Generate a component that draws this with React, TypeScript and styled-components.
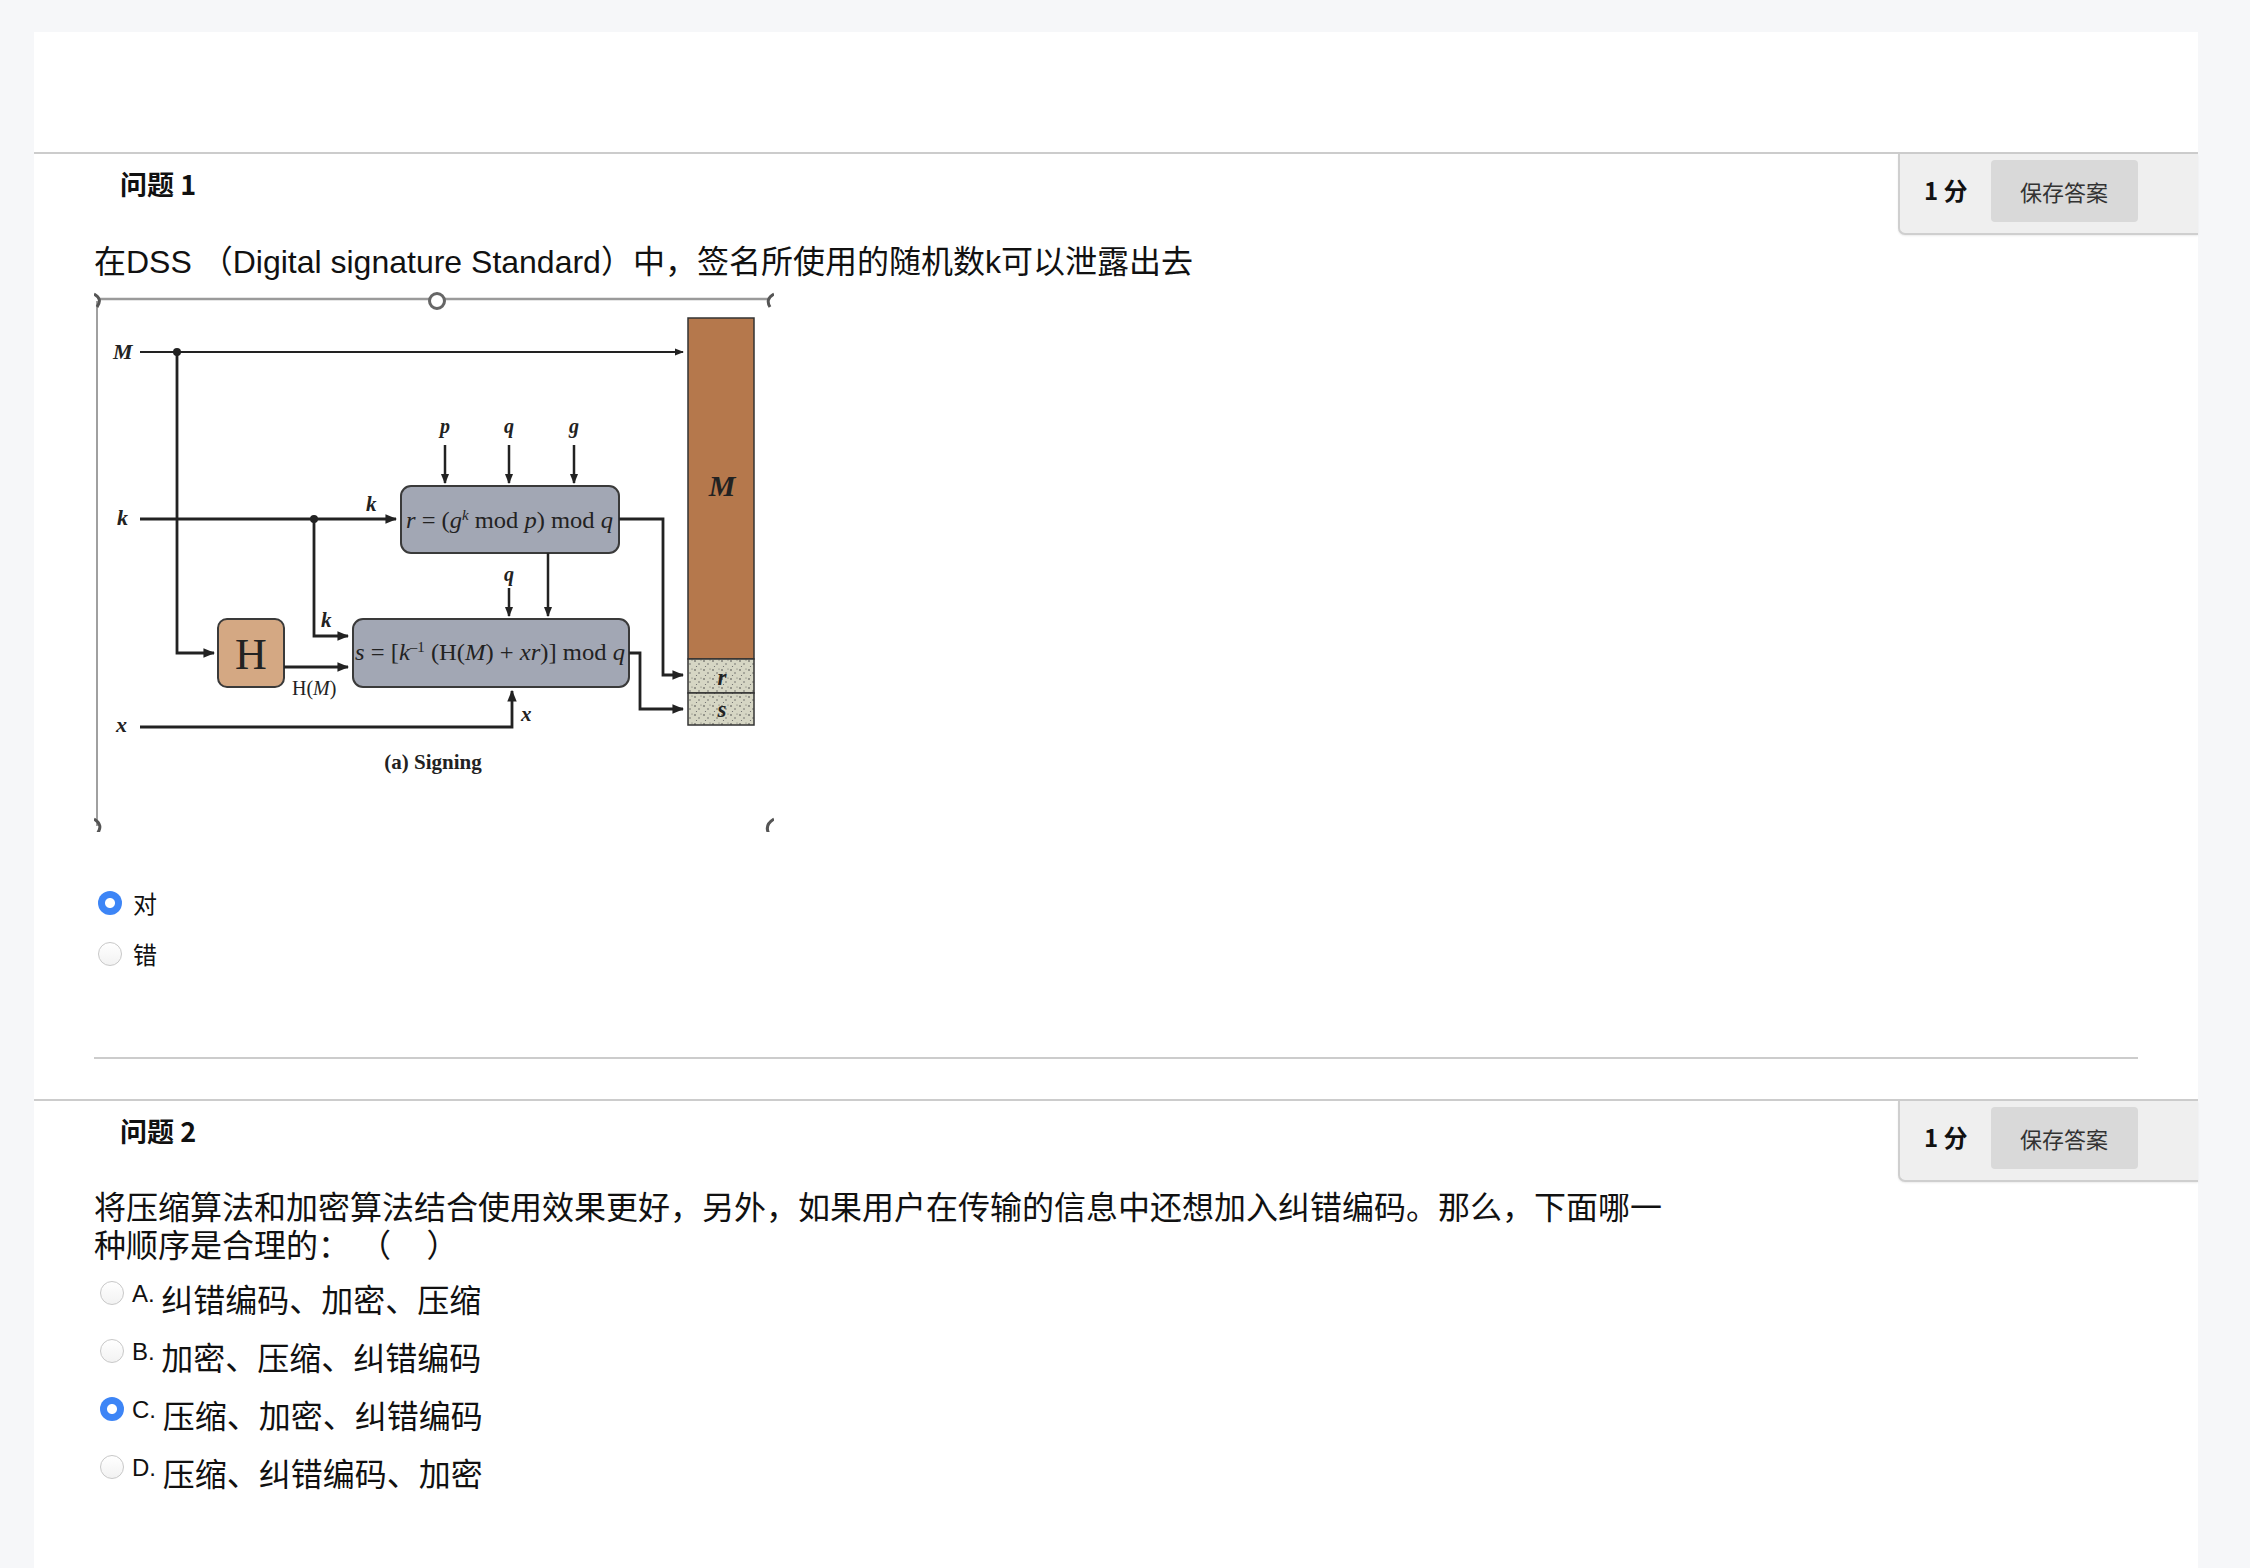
import React from "react";
import styled, { createGlobalStyle } from "styled-components";

const GlobalStyle = createGlobalStyle`
  html, body { margin: 0; padding: 0; }
  body {
    background: #f6f7f9;
    font-family: "Liberation Sans", "Noto Sans CJK SC", sans-serif;
    color: #111;
  }
`;

const Card = styled.div`
  margin: 32px 0 0 34px;
  width: 2164px;
  min-height: 1536px;
  background: #ffffff;
  display: flex;
  flex-direction: column;
`;

const TopSpacer = styled.div`
  height: 120px;
`;

const Section = styled.section<{ $padBottom: number }>`
  border-top: 2px solid #cccccc;
  padding-bottom: ${(p) => p.$padBottom}px;
`;

const Header = styled.div`
  display: flex;
  justify-content: space-between;
  align-items: flex-start;
  padding-left: 86px;
`;

const QLabel = styled.h3`
  margin: 0;
  padding-top: 14px;
  font-family: "Noto Sans CJK SC", sans-serif;
  font-weight: 700;
  font-size: 27px;
  line-height: 32px;
  color: #111;
`;

const PointsBox = styled.div`
  box-sizing: border-box;
  width: 300px;
  height: 81px;
  display: flex;
  align-items: flex-start;
  padding: 6px 0 0 24px;
  gap: 23px;
  background: #efefef;
  border-left: 2px solid #cfcfcf;
  border-bottom: 2px solid #cfcfcf;
  border-bottom-left-radius: 7px;
  box-shadow: 0 1px 2px rgba(0, 0, 0, 0.08);
`;

const Points = styled.span`
  font-family: "Noto Sans CJK SC", sans-serif;
  font-weight: 700;
  font-size: 24px;
  line-height: 60px;
  color: #111;
  white-space: nowrap;
`;

const SaveButton = styled.button`
  width: 147px;
  height: 62px;
  border: none;
  border-radius: 4px;
  background: #d9d9d9;
  color: #333;
  font-family: "Noto Sans CJK SC", sans-serif;
  font-size: 22px;
  line-height: 60px;
  padding: 0;
  cursor: pointer;
`;

const Body = styled.div`
  padding: 0 60px;
  display: flex;
  flex-direction: column;
  align-items: flex-start;
`;

const QuestionText = styled.p<{ $mt: number }>`
  margin: ${(p) => p.$mt}px 0 0 0;
  max-width: 1580px;
  font-family: "Liberation Sans", "Noto Sans CJK SC", sans-serif;
  font-size: 32px;
  line-height: 38px;
  color: #111;
`;

const Figure = styled.div`
  margin-top: 11px;
  width: 680px;
  height: 540px;
  line-height: 0;
`;

const OptionList = styled.div<{ $mt: number; $gap: number }>`
  margin-top: ${(p) => p.$mt}px;
  display: flex;
  flex-direction: column;
  gap: ${(p) => p.$gap}px;
`;

const OptionRow = styled.label<{ $align: string }>`
  display: flex;
  align-items: ${(p) => p.$align};
`;

const Radio = styled.input<{ $ml: number; $mt: number; $mr: number }>`
  appearance: none;
  -webkit-appearance: none;
  box-sizing: border-box;
  width: 24px;
  height: 24px;
  margin: ${(p) => p.$mt}px ${(p) => p.$mr}px 0 ${(p) => p.$ml}px;
  border-radius: 50%;
  border: 1px solid #c8c8c8;
  background: linear-gradient(#ffffff, #f2f2f2);
  flex-shrink: 0;
  &:checked {
    border: none;
    background: radial-gradient(circle, #ffffff 0 4.5px, #3d85f6 5.5px);
  }
`;

const OptionLetter = styled.span`
  margin-top: 1px;
  font-family: "Liberation Sans", sans-serif;
  font-size: 24px;
  line-height: 28px;
  white-space: pre;
  color: #111;
`;

const OptionText = styled.span<{ $size: number; $lh: number }>`
  font-family: "Noto Sans CJK SC", sans-serif;
  font-size: ${(p) => p.$size}px;
  line-height: ${(p) => p.$lh}px;
  color: #111;
`;

const Divider = styled.div`
  margin-top: 89px;
  height: 2px;
  width: 100%;
  background: #cccccc;
`;

const INK = "#222";

const Diagram: React.FC = () => (
  <svg width={680} height={540} viewBox="94 290 680 540" xmlns="http://www.w3.org/2000/svg">
    <defs>
      <marker id="ah" viewBox="0 0 10 10" refX="9" refY="5" markerWidth="4.2" markerHeight="4.2" orient="auto-start-reverse">
        <path d="M0,1 L10,5 L0,9 z" fill={INK} />
      </marker>
      <pattern id="speck" width="9" height="9" patternUnits="userSpaceOnUse">
        <rect width="9" height="9" fill="#d6d6c4" />
        <circle cx="2" cy="2" r="0.8" fill="#444" />
        <circle cx="6" cy="5" r="0.7" fill="#555" />
        <circle cx="3.5" cy="7.5" r="0.6" fill="#666" />
        <circle cx="8" cy="1" r="0.5" fill="#555" />
      </pattern>
    </defs>
    <rect x="94" y="290" width="680" height="540" fill="#ffffff" />

    {/* frame + selection handles */}
    <line x1="100" y1="297" x2="768" y2="297" stroke="#9a9a9a" strokeWidth="2.5" />
    <line x1="97" y1="299" x2="97" y2="824" stroke="#a0a0a0" strokeWidth="2" />
    <path d="M94 292 Q103 297 97 305" fill="none" stroke="#555" strokeWidth="3" />
    <path d="M94 817 Q104 823 97 832" fill="none" stroke="#555" strokeWidth="3" />
    <path d="M774 292 Q765 297 770 305" fill="none" stroke="#555" strokeWidth="3" />
    <path d="M774 817 Q764 823 769 832" fill="none" stroke="#555" strokeWidth="3" />
    <circle cx="437" cy="299" r="7.5" fill="#fff" stroke="#666" strokeWidth="3" />

    <g fontFamily="'Liberation Serif', serif" fill={INK}>
      {/* M input */}
      <text x="113" y="357" fontSize="22" fontStyle="italic" fontWeight="700">M</text>
      <line x1="140" y1="350" x2="683" y2="350" stroke={INK} strokeWidth="2.2" markerEnd="url(#ah)" />
      <circle cx="177" cy="350" r="4" fill={INK} />
      <polyline points="177,350 177,651 214,651" fill="none" stroke={INK} strokeWidth="2.8" markerEnd="url(#ah)" />

      {/* k input */}
      <text x="117" y="523" fontSize="22" fontStyle="italic" fontWeight="700">k</text>
      <line x1="140" y1="517" x2="396" y2="517" stroke={INK} strokeWidth="2.8" markerEnd="url(#ah)" />
      <circle cx="314" cy="517" r="4" fill={INK} />
      <text x="366" y="509" fontSize="21" fontStyle="italic" fontWeight="700">k</text>
      <polyline points="314,517 314,634 348,634" fill="none" stroke={INK} strokeWidth="2.8" markerEnd="url(#ah)" />
      <text x="321" y="625" fontSize="21" fontStyle="italic" fontWeight="700">k</text>

      {/* p q g */}
      <text x="440" y="431" fontSize="20" fontStyle="italic" fontWeight="700">p</text>
      <text x="504" y="431" fontSize="20" fontStyle="italic" fontWeight="700">q</text>
      <text x="569" y="431" fontSize="20" fontStyle="italic" fontWeight="700">g</text>
      <line x1="445" y1="443" x2="445" y2="481" stroke={INK} strokeWidth="2.5" markerEnd="url(#ah)" />
      <line x1="509" y1="443" x2="509" y2="481" stroke={INK} strokeWidth="2.5" markerEnd="url(#ah)" />
      <line x1="574" y1="443" x2="574" y2="481" stroke={INK} strokeWidth="2.5" markerEnd="url(#ah)" />

      {/* r box */}
      <rect x="401" y="484" width="218" height="67" rx="10" fill="#a2a7b4" stroke="#3a3a3a" strokeWidth="2" />
      <text x="406" y="526" fontSize="23" textLength="207" lengthAdjust="spacingAndGlyphs">
        <tspan fontStyle="italic">r</tspan> = (<tspan fontStyle="italic">g</tspan>
        <tspan dy="-8" fontSize="14" fontStyle="italic">k</tspan>
        <tspan dy="8"> mod </tspan>
        <tspan fontStyle="italic">p</tspan>) mod <tspan fontStyle="italic">q</tspan>
      </text>

      {/* to s box */}
      <line x1="548" y1="551" x2="548" y2="614" stroke={INK} strokeWidth="2.5" markerEnd="url(#ah)" />
      <text x="504" y="579" fontSize="20" fontStyle="italic" fontWeight="700">q</text>
      <line x1="509" y1="586" x2="509" y2="614" stroke={INK} strokeWidth="2.5" markerEnd="url(#ah)" />

      {/* H box */}
      <rect x="218" y="617" width="66" height="68" rx="9" fill="#d4a883" stroke="#3a3a3a" strokeWidth="2" />
      <text x="251" y="667" fontSize="44" textAnchor="middle">H</text>
      <line x1="284" y1="665" x2="348" y2="665" stroke={INK} strokeWidth="2.8" markerEnd="url(#ah)" />
      <text x="292" y="693" fontSize="20">H(<tspan fontStyle="italic">M</tspan>)</text>

      {/* s box */}
      <rect x="353" y="617" width="276" height="68" rx="10" fill="#a2a7b4" stroke="#3a3a3a" strokeWidth="2" />
      <text x="355" y="658" fontSize="23" textLength="270" lengthAdjust="spacingAndGlyphs">
        <tspan fontStyle="italic">s</tspan> = [<tspan fontStyle="italic">k</tspan>
        <tspan dy="-8" fontSize="14">–1</tspan>
        <tspan dy="8"> (H(</tspan>
        <tspan fontStyle="italic">M</tspan>) + <tspan fontStyle="italic">xr</tspan>)] mod <tspan fontStyle="italic">q</tspan>
      </text>

      {/* x input */}
      <text x="116" y="730" fontSize="22" fontStyle="italic" fontWeight="700">x</text>
      <polyline points="140,725 512,725 512,689" fill="none" stroke={INK} strokeWidth="2.8" markerEnd="url(#ah)" />
      <text x="521" y="719" fontSize="21" fontStyle="italic" fontWeight="700">x</text>

      {/* outputs */}
      <polyline points="619,517 663,517 663,673 683,673" fill="none" stroke={INK} strokeWidth="2.8" markerEnd="url(#ah)" />
      <polyline points="629,651 640,651 640,707 683,707" fill="none" stroke={INK} strokeWidth="2.8" markerEnd="url(#ah)" />

      {/* message block */}
      <rect x="688" y="316" width="66" height="341" fill="#b5784c" stroke="#333" strokeWidth="1.5" />
      <text x="722" y="494" fontSize="30" fontStyle="italic" fontWeight="700" textAnchor="middle">M</text>
      <rect x="688" y="657" width="66" height="34" fill="url(#speck)" stroke="#333" strokeWidth="1.5" />
      <text x="722" y="683" fontSize="23" fontStyle="italic" fontWeight="700" textAnchor="middle">r</text>
      <rect x="688" y="691" width="66" height="32" fill="url(#speck)" stroke="#333" strokeWidth="1.5" />
      <text x="722" y="715" fontSize="23" fontStyle="italic" fontWeight="700" textAnchor="middle">s</text>

      <text x="433" y="767" fontSize="21" fontWeight="700" textAnchor="middle">(a) Signing</text>
    </g>
  </svg>
);

type Choice = { letter?: string; text: string; checked?: boolean };

const q1Choices: Choice[] = [
  { text: "对", checked: true },
  { text: "错" },
];

const q2Choices: Choice[] = [
  { letter: "A. ", text: "纠错编码、加密、压缩" },
  { letter: "B. ", text: "加密、压缩、纠错编码" },
  { letter: "C. ", text: "压缩、加密、纠错编码", checked: true },
  { letter: "D. ", text: "压缩、纠错编码、加密" },
];

const PointsPanel: React.FC = () => (
  <PointsBox>
    <Points>1 分</Points>
    <SaveButton type="button">保存答案</SaveButton>
  </PointsBox>
);

export default function App() {
  return (
    <>
      <GlobalStyle />
      <Card>
        <TopSpacer />
        <Section $padBottom={40}>
          <Header>
            <QLabel>问题 1</QLabel>
            <PointsPanel />
          </Header>
          <Body>
            <QuestionText $mt={8}>在DSS （Digital signature Standard）中，签名所使用的随机数k可以泄露出去</QuestionText>
            <Figure>
              <Diagram />
            </Figure>
            <OptionList $mt={57} $gap={23}>
              {q1Choices.map((c, i) => (
                <OptionRow key={i} $align="center">
                  <Radio type="radio" name="q1" defaultChecked={!!c.checked} $ml={4} $mt={0} $mr={11} />
                  <OptionText $size={24} $lh={28}>{c.text}</OptionText>
                </OptionRow>
              ))}
            </OptionList>
            <Divider />
          </Body>
        </Section>
        <Section $padBottom={60}>
          <Header>
            <QLabel>问题 2</QLabel>
            <PointsPanel />
          </Header>
          <Body>
            <QuestionText $mt={7}>
              {"将压缩算法和加密算法结合使用效果更好，另外，如果用户在传输的信息中还想加入纠错编码。那么，下面哪一种顺序是合理的：\u00a0（\u00a0\u00a0\u00a0\u00a0）"}
            </QuestionText>
            <OptionList $mt={14} $gap={20}>
              {q2Choices.map((c, i) => (
                <OptionRow key={i} $align="flex-start">
                  <Radio type="radio" name="q2" defaultChecked={!!c.checked} $ml={6} $mt={2} $mr={8} />
                  <OptionLetter>{c.letter}</OptionLetter>
                  <OptionText $size={32} $lh={38}>{c.text}</OptionText>
                </OptionRow>
              ))}
            </OptionList>
          </Body>
        </Section>
      </Card>
    </>
  );
}
